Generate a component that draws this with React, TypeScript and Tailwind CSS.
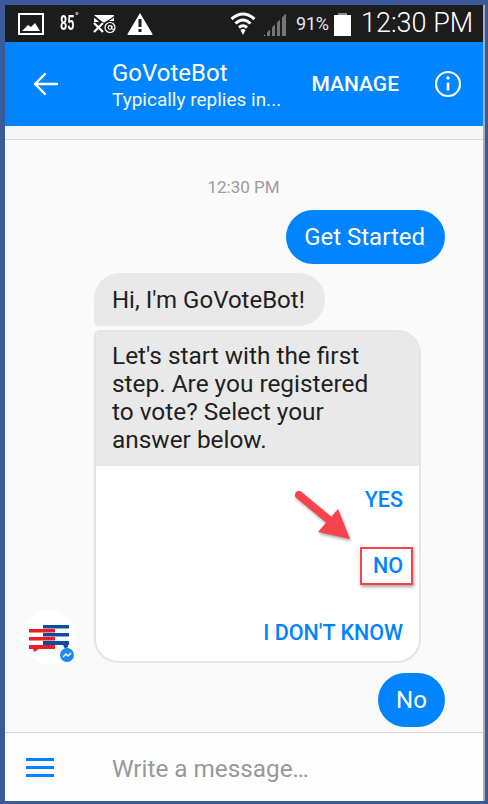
export default function App() {
  return (
    <div className="relative w-[488px] h-[804px] bg-[#3c5a99] pt-[5px] pl-[5px] pr-[3px] pb-[3px] font-['Roboto',sans-serif] overflow-hidden">
      <div className="flex flex-col h-full bg-[#fafafa] border-r-2 border-[#a9adb5]">
        {/* status bar */}
        <div className="h-[37px] shrink-0 bg-[#1c1c1c] flex items-center text-white pl-[13px]">
          <svg width="26" height="22" viewBox="0 0 26 22" className="mr-[16px]">
            <rect x="1" y="1" width="24" height="20" fill="none" stroke="#fff" strokeWidth="2" />
            <path d="M4 18 L10 12 L13 14 L17 10 L22 18Z" fill="#fff" />
          </svg>
          <span className="text-[21px] font-bold w-[14px] leading-none [transform:scaleX(.6)] origin-left">85</span>
          <span className="text-[10px] leading-none -mt-[14px] ml-[1px] w-[6px] mr-[11px]">°</span>
          <svg width="24" height="20" viewBox="0 0 24 20" className="mr-[11px]">
            <path d="M2 1H22V7H15L12 9L9 7L2 1Z" fill="#fff" />
            <path d="M2 3V8H7Z" fill="#fff" />
            <path d="M2 3L12 9.500L22 3" fill="none" stroke="#1c1c1c" strokeWidth="1.200" />
            <path d="M2 9L11 18M11 9L2 18" stroke="#fff" strokeWidth="2.200" />
            <circle cx="18" cy="13.500" r="5" fill="none" stroke="#fff" strokeWidth="1.200" />
            <circle cx="18" cy="13.500" r="1.800" fill="none" stroke="#fff" strokeWidth="1.200" />
            <path d="M20 11.500V15Q20.500 16 22 15" fill="none" stroke="#fff" strokeWidth="1" />
          </svg>
          <svg width="26" height="24" viewBox="0 0 26 24" className="mr-[77px]">
            <path d="M13 1 L25.500 22 Q26 23 24.500 23 H1.500 Q0 23 .5 22Z" fill="#fff" />
            <rect x="11.500" y="7" width="3" height="8" fill="#1c1c1c" />
            <rect x="11.500" y="17" width="3" height="3" fill="#1c1c1c" />
          </svg>
          <svg width="26" height="24" viewBox="0 0 26 24" className="mr-[8px]">
            <path d="M1.500 7 Q13 -3 24.500 7 M5.500 11.500 Q13 4.500 20.500 11.500 M9 15.500 Q13 12 17 15.500" fill="none" stroke="#fff" strokeWidth="3" />
            <path d="M10.500 18 Q13 16 15.500 18 L13 23Z" fill="#fff" />
          </svg>
          <svg width="24" height="24" viewBox="0 0 24 24" className="mr-[8px]">
            <path d="M0 23h1v1H0z" fill="#aaa" />
            <path d="M3 20.500l3-3V24H3zM8 15.500l3-3V24H8zM13 10.500l3-3V24h-3zM18 5.500l4-4V24h-4z" fill="#767676" />
          </svg>
          <span className="text-[18px] leading-none w-[33px] tracking-[-0.2px] text-[#e8e8e8]">91%</span>
          <div className="ml-[5px] w-[17px] h-[21px] mt-[3px] bg-white relative">
            <div className="absolute -top-[2px] left-[4px] w-[9px] h-[2px] bg-[#8a8a8a]" />
          </div>
          <span className="ml-[10px] text-[27px] leading-none font-light whitespace-nowrap">12:30 PM</span>
        </div>
        {/* header */}
        <div className="h-[84px] shrink-0 bg-[#0084ff] flex items-center text-white pl-[28px] pr-[21px]">
          <svg width="26" height="24" viewBox="0 0 26 24" fill="none" stroke="#fff" strokeWidth="2.400" strokeLinecap="round" strokeLinejoin="round">
            <path d="M2 12H24M12 2L2 12L12 22" />
          </svg>
          <div className="ml-[53px] flex flex-col mt-[2px]">
            <span className="text-[24px] leading-[26px]">GoVoteBot</span>
            <span className="text-[19px] leading-[22px] mt-[3px] text-[#f2f8ff]">Typically replies in...</span>
          </div>
          <span className="ml-auto text-[21px] font-medium mt-[2px]">MANAGE</span>
          <svg width="28" height="28" viewBox="0 0 28 28" className="ml-[35px]" fill="none" stroke="#fff" strokeWidth="2.200">
            <circle cx="14" cy="14" r="12" />
            <path d="M14 12.500V20.500" strokeWidth="2.600" />
            <circle cx="14" cy="8" r="1.700" fill="#fff" stroke="none" />
          </svg>
        </div>
        <div className="h-[14px] shrink-0 bg-[#f6f6f6] border-b border-[#dcdcdc]" />
        {/* chat */}
        <div className="flex-1 min-h-0 flex flex-col overflow-hidden pl-[40px] pr-[38px]">
          <div className="text-center text-[17px] leading-[20px] text-[#9b9b9b] mt-[37px] mr-[3px]">12:30 PM</div>
          <div className="self-end mt-[13px] h-[54px] pl-[18px] pr-[20px] flex items-center rounded-full bg-[#0084ff] text-white text-[24px]">Get Started</div>
          <div className="self-start ml-[49px] mt-[9px] h-[53px] pl-[18px] pr-[20px] flex items-center rounded-t-[26px] rounded-br-[26px] rounded-bl-[5px] bg-[#e9e9e9] text-[#1f1f1f] text-[24px]">Hi, I'm GoVoteBot!</div>
          <div className="flex items-end -ml-[23px] mt-[4px]">
            <div className="relative w-[54px] h-[54px] rounded-full bg-white shrink-0 mb-[-1px]">
              <svg width="54" height="54" viewBox="0 0 54 54" className="absolute inset-0">
                <path d="M21 15H47V18.500H21ZM21 23H47V26.500H21ZM21 31H47V35H21Z" fill="#0f4c9c" />
                <path d="M41 35H46V37L43 38.500Z" fill="#0f4c9c" />
                <path d="M7 19H33V22.500H7ZM7 27H33V30.500H7ZM7 35H33V39H7Z" fill="#ee1c25" />
                <path d="M11 39H17L12 42Z" fill="#ee1c25" />
              </svg>
              <div className="absolute right-[2px] bottom-[2px] w-[14px] h-[14px] rounded-full bg-[#1e88f5] flex items-center justify-center">
                <svg width="10" height="6" viewBox="0 0 10 6" fill="none" stroke="#fff" strokeWidth="1.300">
                  <path d="M1 5L4 2L6 4L9 1" />
                </svg>
              </div>
            </div>
            <div className="ml-[18px] w-[327px] h-[333px] rounded-[24px] rounded-tl-[6px] bg-white border-2 border-[#e4e4e4] overflow-hidden flex flex-col">
              <div className="h-[134px] shrink-0 bg-[#e9e9e9] pl-[16px] pt-[10px] text-[24.400px] leading-[28px] text-[#1f1f1f]">
                <div>Let's start with the first</div>
                <div>step. Are you registered</div>
                <div>to vote? Select your</div>
                <div>answer below.</div>
              </div>
              <div className="flex-1 flex flex-col items-end pr-[16px] text-[#0084ff] text-[21.500px] font-medium">
                <div className="mt-[21px] leading-[26px]">YES</div>
                <div className="relative mt-[40px] leading-[26px]">
                  NO
                  <div className="absolute -left-[13px] -right-[10px] -top-[6px] -bottom-[6px] border-[2px] border-[#f6434c] shadow-[1px_2px_3px_rgba(0,0,0,.35)]" />
                </div>
                <div className="mt-[41px] leading-[26px]">I DON'T KNOW</div>
              </div>
            </div>
          </div>
          <div className="self-end mt-[10px] h-[54px] w-[67px] shrink-0 flex items-center justify-center rounded-[27px] bg-[#0084ff] text-white text-[24px]">No</div>
        </div>
        {/* composer */}
        <div className="h-[69px] shrink-0 border-t border-[#d8d8d8] bg-[#fdfdfd] flex items-center pl-[21px]">
          <div className="w-[28px] flex flex-col gap-[5px] mt-[1px]">
            <div className="h-[3px] bg-[#0084ff]" />
            <div className="h-[3px] bg-[#0084ff]" />
            <div className="h-[3px] bg-[#0084ff]" />
          </div>
          <span className="ml-[58px] text-[24.300px] leading-none mt-[4px] text-[#999]">Write a message…</span>
        </div>
      </div>
      <svg width="68" height="58" viewBox="0 0 68 58" className="absolute left-[294px] top-[490px] drop-shadow-[1px_2px_1.500px_rgba(0,0,0,.35)]">
        <path d="M5 5L34 29" stroke="#f6434c" strokeWidth="8" strokeLinecap="round" />
        <path d="M44 19L56 49L24 42Z" fill="#f6434c" />
      </svg>
    </div>
  );
}
